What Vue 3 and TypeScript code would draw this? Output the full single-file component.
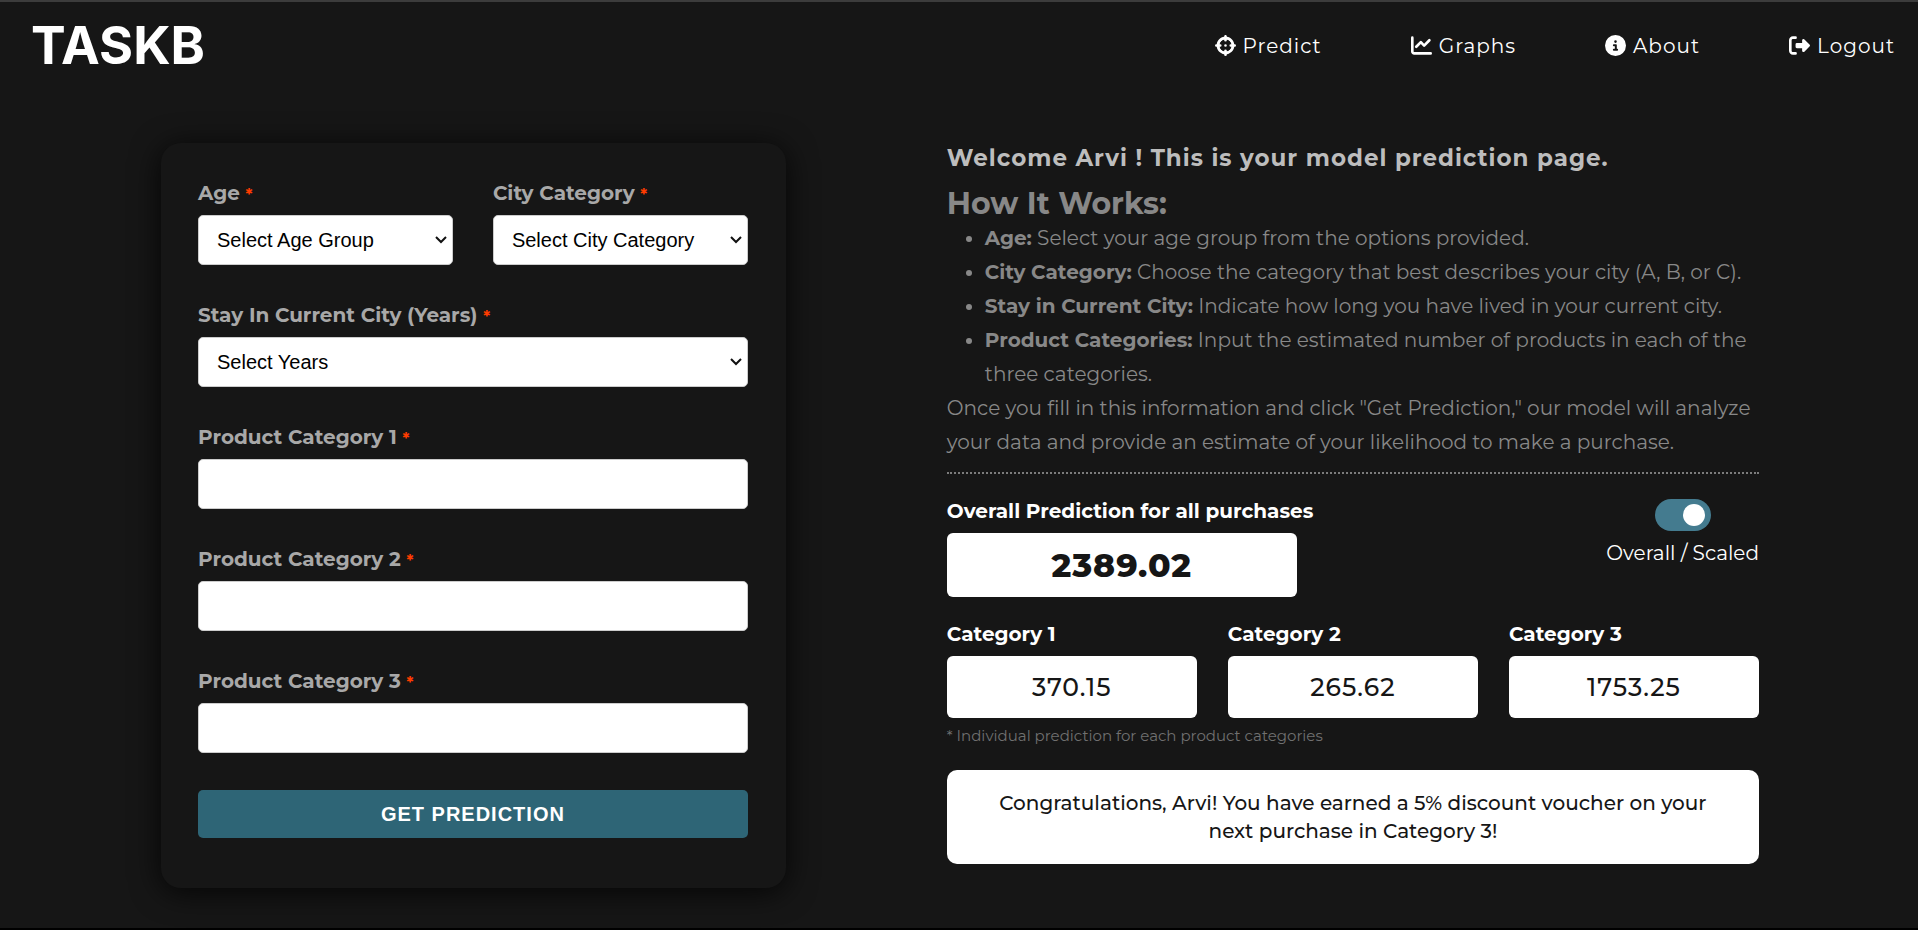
<script setup lang="ts">
import { ref } from 'vue'

interface SelectField { id: string; label: string; placeholder: string; options: string[]; wide: boolean }

const selects: SelectField[] = [
  { id: 'age', label: 'Age', placeholder: 'Select Age Group', options: ['0-17', '18-25', '26-35', '36-45', '46-50', '51-55', '55+'], wide: false },
  { id: 'city', label: 'City Category', placeholder: 'Select City Category', options: ['A', 'B', 'C'], wide: false },
  { id: 'stay', label: 'Stay In Current City (Years)', placeholder: 'Select Years', options: ['0', '1', '2', '3', '4+'], wide: true },
]
const products = [1, 2, 3]
const results = [
  { id: 1, value: '370.15' },
  { id: 2, value: '265.62' },
  { id: 3, value: '1753.25' },
]
const steps = [
  { term: 'Age:', text: 'Select your age group from the options provided.' },
  { term: 'City Category:', text: 'Choose the category that best describes your city (A, B, or C).' },
  { term: 'Stay in Current City:', text: 'Indicate how long you have lived in your current city.' },
  { term: 'Product Categories:', text: 'Input the estimated number of products in each of the three categories.' },
]
const scaled = ref(true)
</script>

<template>
  <div class="page">
    <header class="topbar">
      <a class="logo" href="#">TASKB</a>
      <nav class="nav" aria-label="Main">
        <a href="#predict">
          <svg viewBox="0 0 512 512" aria-hidden="true"><path fill-rule="evenodd" d="M256 0c18 0 32 14 32 32v10c93 14 168 89 182 182h10a32 32 0 0 1 0 64h-10c-14 93-89 168-182 182v10a32 32 0 0 1-64 0v-10C131 456 56 381 42 288H32a32 32 0 0 1 0-64h10C56 131 131 56 224 42V32c0-18 14-32 32-32zM107 288c12 58 59 105 117 117v-21a32 32 0 0 1 64 0v21c58-12 105-59 117-117h-21a32 32 0 0 1 0-64h21c-12-58-59-105-117-117v21a32 32 0 0 1-64 0v-21c-58 12-105 59-117 117h21a32 32 0 0 1 0 64zm149-64a32 32 0 1 1 0 64 32 32 0 0 1 0-64z" /><path class="ring" d="M256 84a172 172 0 1 1 0 344 172 172 0 0 1 0-344z" /></svg>
          <span>Predict</span>
        </a>
        <a href="#graphs">
          <svg viewBox="0 0 512 512" aria-hidden="true"><path d="M64 64a32 32 0 0 0-64 0v336c0 44 36 80 80 80h400a32 32 0 0 0 0-64H80c-9 0-16-7-16-16zm407 87a32 32 0 0 0-46-46L320 211l-57-58a32 32 0 0 0-46 0L105 265a32 32 0 0 0 46 46l89-90 57 58a32 32 0 0 0 46 0z" /></svg>
          <span>Graphs</span>
        </a>
        <a href="#about">
          <svg viewBox="0 0 512 512" aria-hidden="true"><path fill-rule="evenodd" d="M256 0a256 256 0 1 1 0 512 256 256 0 0 1 0-512zm-40 336a24 24 0 0 0 0 48h80a24 24 0 0 0 0-48h-8v-88c0-13-11-24-24-24h-48a24 24 0 0 0 0 48h24v64zm40-144a32 32 0 1 0 0-64 32 32 0 0 0 0 64z" /></svg>
          <span>About</span>
        </a>
        <a href="#logout">
          <svg viewBox="0 0 512 512" aria-hidden="true"><path d="M505 273c9-9 9-25 0-34L377 111a32 32 0 0 0-57 17v64H192a32 32 0 0 0-32 32v64c0 18 14 32 32 32h128v64c0 14 8 25 20 30s26 2 35-7zM160 96a32 32 0 0 0 0-64H96C43 32 0 75 0 128v256c0 53 43 96 96 96h64a32 32 0 0 0 0-64H96c-18 0-32-14-32-32V128c0-18 14-32 32-32z" /></svg>
          <span>Logout</span>
        </a>
      </nav>
    </header>

    <main class="content">
      <form class="card" @submit.prevent>
        <div v-for="f in selects" :key="f.id" class="field" :class="{ wide: f.wide }">
          <label :for="f.id">{{ f.label }} <span class="req">*</span></label>
          <select :id="f.id" required>
            <option value="">{{ f.placeholder }}</option>
            <option v-for="o in f.options" :key="o">{{ o }}</option>
          </select>
        </div>
        <div v-for="n in products" :key="n" class="field wide">
          <label :for="`product-${n}`">Product Category {{ n }} <span class="req">*</span></label>
          <input :id="`product-${n}`" type="text" inputmode="numeric" required />
        </div>
        <button class="submit wide" type="submit">GET PREDICTION</button>
      </form>

      <section class="info">
        <h1>Welcome Arvi ! This is your model prediction page.</h1>
        <div class="guide">
          <h2>How It Works:</h2>
          <ul>
            <li v-for="s in steps" :key="s.term"><strong>{{ s.term }}</strong> {{ s.text }}</li>
          </ul>
          <p>Once you fill in this information and click "Get Prediction," our model will analyze your data and provide an estimate of your likelihood to make a purchase.</p>
        </div>

        <div class="overall">
          <div class="result total">
            <h3>Overall Prediction for all purchases</h3>
            <output class="value">2389.02</output>
          </div>
          <label class="toggle">
            <input v-model="scaled" type="checkbox" role="switch" />
            <span>Overall / Scaled</span>
          </label>
        </div>

        <div class="results">
          <div v-for="r in results" :key="r.id" class="result">
            <h3>Category {{ r.id }}</h3>
            <output class="value">{{ r.value }}</output>
          </div>
        </div>
        <p class="note">* Individual prediction for each product categories</p>
        <p class="voucher">Congratulations, Arvi! You have earned a 5% discount voucher on your next purchase in Category 3!</p>
      </section>
    </main>
  </div>
</template>

<style>
body {
  margin: 0;
  background: #161616;
}
</style>

<style scoped>
* {
  box-sizing: border-box;
}
.page {
  min-height: 100vh;
  padding-bottom: 40px;
  border-top: 2px solid #3c3c3c;
  border-bottom: 2px solid #000;
  background: #161616;
  color: #fff;
  font-family: Montserrat, Inter, "Open Sans", sans-serif;
  font-size: 20px;
}
h1, h2, h3, p, ul {
  margin: 0;
}
.topbar {
  display: flex;
  align-items: center;
  justify-content: space-between;
  height: 87px;
  padding: 0 23px 0 31px;
}
.logo {
  color: #fff;
  font-family: Inter, sans-serif;
  font-size: 52px;
  font-weight: 700;
  line-height: 64px;
  text-decoration: none;
}
.nav {
  display: flex;
  gap: 89px;
}
.nav a {
  display: flex;
  align-items: center;
  gap: 7px;
  color: #fff;
  letter-spacing: 1px;
  line-height: 24px;
  text-decoration: none;
}
.nav svg {
  width: 21px;
  height: 21px;
  fill: currentColor;
}
.nav .ring {
  fill: none;
  stroke: currentColor;
  stroke-width: 40;
}
.content {
  display: grid;
  grid-template-columns: 10fr 13fr;
  gap: 161px;
  align-items: start;
  padding: 54px 159px 0 161px;
}
.card {
  display: grid;
  grid-template-columns: 1fr 1fr;
  gap: 37px 40px;
  padding: 37px 38px 50px 37px;
  border-radius: 20px;
  background: #161616;
  box-shadow: 0 4px 30px rgba(0, 0, 0, 0.8);
}
.field {
  display: flex;
  flex-direction: column;
  gap: 9px;
}
.wide {
  grid-column: 1 / -1;
}
.field label {
  color: #a8a8a8;
  font-weight: 700;
  line-height: 26px;
}
.req {
  color: #ff3c00;
  font-size: 16px;
  line-height: 16px;
}
.field select,
.field input {
  width: 100%;
  height: 50px;
  padding: 0 18px;
  border: 1px solid #ccc;
  border-radius: 5px;
  background: #fff;
  color: #000;
  font-family: "Liberation Sans", Arial, sans-serif;
  font-size: 20px;
}
.field select {
  appearance: none;
  background: #fff url("data:image/svg+xml,%3Csvg xmlns='http://www.w3.org/2000/svg' width='12' height='8' fill='none' stroke='%23111' stroke-width='2'%3E%3Cpath d='M1 1l5 5 5-5'/%3E%3C/svg%3E") no-repeat right 5px center;
}
.submit {
  height: 48px;
  border: 0;
  border-radius: 5px;
  background: #2e6576;
  color: #fff;
  font-family: "Liberation Sans", Arial, sans-serif;
  font-size: 20px;
  font-weight: 700;
  letter-spacing: 1px;
}
h1 {
  color: #bdbdbd;
  font-size: 23px;
  font-weight: 700;
  letter-spacing: 1px;
  line-height: 30px;
}
.guide {
  padding: 14px 0 13px;
  border-bottom: 2px dotted #7c7c7c;
  color: #888;
  line-height: 34px;
}
h2 {
  font-size: 30px;
  font-weight: 700;
  line-height: 34px;
}
ul {
  padding-left: 38px;
}
.overall {
  display: flex;
  justify-content: space-between;
  align-items: flex-start;
  padding: 25px 0;
}
h3 {
  font-size: 20px;
  font-weight: 700;
  line-height: 24px;
}
.result {
  display: flex;
  flex-direction: column;
  gap: 10px;
}
.value {
  display: flex;
  align-items: center;
  justify-content: center;
  height: 62px;
  border-radius: 6px;
  background: #fff;
  color: #161616;
  font-size: 25px;
  font-weight: 500;
  letter-spacing: 1px;
}
.total .value {
  width: 350px;
  height: 64px;
  font-size: 33px;
  font-weight: 800;
}
.toggle {
  display: flex;
  flex-direction: column;
  align-items: center;
  gap: 10px;
  line-height: 24px;
}
.toggle input {
  display: flex;
  align-items: center;
  width: 56px;
  height: 32px;
  margin: 0;
  padding: 0 6px;
  border-radius: 16px;
  background: #555;
  appearance: none;
}
.toggle input::before {
  content: "";
  width: 22px;
  height: 22px;
  border-radius: 50%;
  background: #fff;
}
.toggle input:checked {
  justify-content: flex-end;
  background: #447b8f;
}
.results {
  display: grid;
  grid-template-columns: repeat(3, 1fr);
  gap: 31px;
}
.note {
  padding-top: 6px;
  color: #707070;
  font-size: 15px;
  line-height: 24px;
}
.voucher {
  margin-top: 22px;
  padding: 19px 40px;
  border-radius: 10px;
  background: #fff;
  color: #161616;
  font-weight: 500;
  line-height: 28px;
  text-align: center;
}
</style>
